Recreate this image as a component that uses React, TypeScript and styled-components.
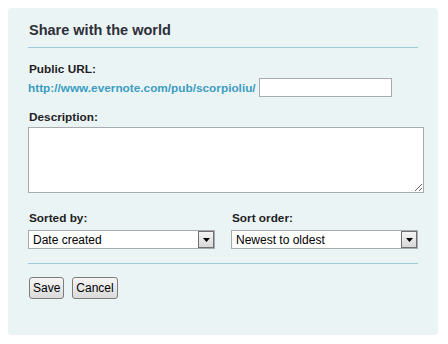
import { FC } from "react";
import styled, { createGlobalStyle } from "styled-components";

const GlobalStyle = createGlobalStyle`
    body {
        margin: 8px;
        background: #ffffff;
        font-family: "Liberation Sans", Arial, sans-serif;
    }
`;

// panel
const Panel = styled.div`
    box-sizing: border-box;
    width: 430px;
    height: 327px;
    padding: 14px 20px 0 20px;
    background-color: #ebf4f5;
    border-radius: 4px;
`;

const Title = styled.h2`
    margin: 0;
    padding: 0 0 8px 1px;
    font-size: 14.5px;
    line-height: 17px;
    font-weight: bold;
    color: #2e2f38;
    border-bottom: 1px solid #9fcbd7;
`;

const Label = styled.div<{ gap: number }>`
    margin-top: ${(props) => props.gap}px;
    padding-left: 1px;
    font-size: 11.8px;
    line-height: 14px;
    font-weight: bold;
    color: #1e1e24;
`;

const UrlRow = styled.div`
    display: flex;
    align-items: center;
    gap: 3px;
    margin-top: 2px;
`;

const UrlLink = styled.a`
    font-size: 11.8px;
    font-weight: bold;
    color: #3b9dc1;
    text-decoration: none;
`;

const TextInput = styled.input`
    box-sizing: border-box;
    width: 133px;
    height: 19px;
    border: 1px solid #a7abae;
    background: #fff;
    padding: 0 2px;
    margin: 0;
`;

const TextArea = styled.textarea`
    display: block;
    box-sizing: border-box;
    width: 396px;
    height: 66px;
    margin-top: 3px;
    border: 1px solid #a7abae;
    background: #fff;
    padding: 2px;
    font-family: "Liberation Sans", Arial, sans-serif;
    font-size: 12px;
`;

const SortGrid = styled.div`
    display: grid;
    grid-template-columns: 187px 187px;
    column-gap: 16px;
    margin-top: 18px;
`;

const SortLabel = styled.div`
    padding-left: 1px;
    font-size: 11.8px;
    line-height: 14px;
    font-weight: bold;
    color: #1e1e24;
`;

const SelectBox = styled.div`
    box-sizing: border-box;
    display: flex;
    height: 19px;
    margin-top: 5px;
    border: 1px solid #a7abae;
    background: #fff;
`;

const NativeSelect = styled.select`
    flex: 1;
    min-width: 0;
    appearance: none;
    border: none;
    outline: none;
    background: transparent;
    padding: 0 0 0 4px;
    margin: 0;
    font-family: "Liberation Sans", Arial, sans-serif;
    font-size: 12px;
    color: #000;
`;

const ArrowBox = styled.div`
    box-sizing: border-box;
    display: flex;
    align-items: center;
    justify-content: center;
    width: 16px;
    border: 1px solid #707070;
    background: linear-gradient(#f4f4f4, #d8d8d8);
`;

const Divider = styled.hr`
    margin: 14px 0 0 0;
    border: none;
    border-top: 1px solid #9fcbd7;
`;

const Buttons = styled.div`
    display: flex;
    gap: 8px;
    margin-top: 13px;
    padding-left: 1px;
`;

const Button = styled.button`
    box-sizing: border-box;
    height: 22px;
    padding: 0 3px;
    border: 1px solid #7d7d7d;
    border-radius: 3px;
    background: linear-gradient(#f6f6f6, #dadada);
    font-family: "Liberation Sans", Arial, sans-serif;
    font-size: 12px;
    color: #000;
`;

const Arrow: FC = () => (
    <svg width="7" height="4" viewBox="0 0 7 4">
        <path d="M0 0H7L3.5 4Z" fill="#000" />
    </svg>
);

const SortSelect: FC<{ options: string[] }> = ({ options }) => (
    <SelectBox>
        <NativeSelect defaultValue={options[0]}>
            {options.map((o) => (
                <option key={o}>{o}</option>
            ))}
        </NativeSelect>
        <ArrowBox>
            <Arrow />
        </ArrowBox>
    </SelectBox>
);

const App: FC = () => {
    return (
        <>
            <GlobalStyle />
            <Panel>
                <Title>Share with the world</Title>
                <Label gap={14}>Public URL:</Label>
                <UrlRow>
                    <UrlLink href="#">http://www.evernote.com/pub/scorpioliu/</UrlLink>
                    <TextInput type="text" />
                </UrlRow>
                <Label gap={13}>Description:</Label>
                <TextArea />
                <SortGrid>
                    <SortLabel>Sorted by:</SortLabel>
                    <SortLabel>Sort order:</SortLabel>
                    <SortSelect options={["Date created", "Date updated", "Title"]} />
                    <SortSelect options={["Newest to oldest", "Oldest to newest"]} />
                </SortGrid>
                <Divider />
                <Buttons>
                    <Button>Save</Button>
                    <Button>Cancel</Button>
                </Buttons>
            </Panel>
        </>
    );
};

export default App;
